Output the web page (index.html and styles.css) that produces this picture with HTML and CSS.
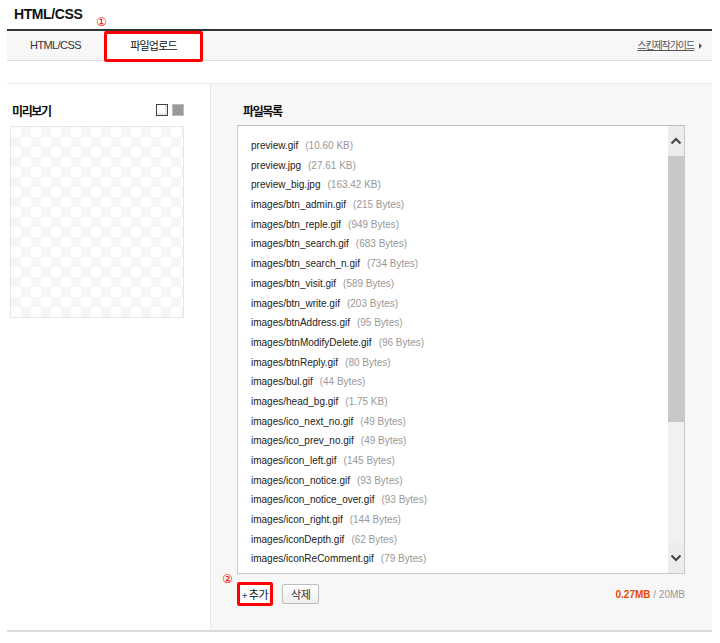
FILE: index.html
```html
<!DOCTYPE html>
<html lang="ko">
<head>
  <meta charset="UTF-8">
  <title>HTML/CSS 파일업로드</title>
  <link rel="stylesheet" href="styles.css">
</head>
<body>
  <div id="skin-editor">
    <h1 class="title">HTML/CSS</h1>
    <span class="mark mark-1">①</span>
    <div class="tabs">
      <div class="tab">HTML/CSS</div>
      <div class="tab active">파일업로드</div>
      <a class="guide" href="#">스킨제작가이드</a>
      <span class="guide-arrow"></span>
    </div>

    <div class="content">
      <div class="preview-panel">
        <div class="panel-head">
          <h3>미리보기</h3>
          <div class="bg-toggle">
            <span class="bg-white"></span>
            <span class="bg-gray"></span>
          </div>
        </div>
        <div class="preview-box"></div>
      </div>

      <div class="files-panel">
        <div class="panel-head">
          <h3>파일목록</h3>
        </div>
        <div class="file-box">
          <ul class="file-list">
            <li>preview.gif<span class="size">(10.60 KB)</span></li>
            <li>preview.jpg<span class="size">(27.61 KB)</span></li>
            <li>preview_big.jpg<span class="size">(163.42 KB)</span></li>
            <li>images/btn_admin.gif<span class="size">(215 Bytes)</span></li>
            <li>images/btn_reple.gif<span class="size">(949 Bytes)</span></li>
            <li>images/btn_search.gif<span class="size">(683 Bytes)</span></li>
            <li>images/btn_search_n.gif<span class="size">(734 Bytes)</span></li>
            <li>images/btn_visit.gif<span class="size">(589 Bytes)</span></li>
            <li>images/btn_write.gif<span class="size">(203 Bytes)</span></li>
            <li>images/btnAddress.gif<span class="size">(95 Bytes)</span></li>
            <li>images/btnModifyDelete.gif<span class="size">(96 Bytes)</span></li>
            <li>images/btnReply.gif<span class="size">(80 Bytes)</span></li>
            <li>images/bul.gif<span class="size">(44 Bytes)</span></li>
            <li>images/head_bg.gif<span class="size">(1.75 KB)</span></li>
            <li>images/ico_next_no.gif<span class="size">(49 Bytes)</span></li>
            <li>images/ico_prev_no.gif<span class="size">(49 Bytes)</span></li>
            <li>images/icon_left.gif<span class="size">(145 Bytes)</span></li>
            <li>images/icon_notice.gif<span class="size">(93 Bytes)</span></li>
            <li>images/icon_notice_over.gif<span class="size">(93 Bytes)</span></li>
            <li>images/icon_right.gif<span class="size">(144 Bytes)</span></li>
            <li>images/iconDepth.gif<span class="size">(62 Bytes)</span></li>
            <li>images/iconReComment.gif<span class="size">(79 Bytes)</span></li>
            <li>images/iconTag.gif<span class="size">(126 Bytes)</span></li>
          </ul>
          <div class="scrollbar">
            <div class="arrow">
              <svg width="12" height="8" viewBox="0 0 12 8"><path d="M1.5 6.5 L6 2 L10.5 6.5" fill="none" stroke="#444" stroke-width="2"/></svg>
            </div>
            <div class="thumb"></div>
            <div class="arrow arrow-down">
              <svg width="12" height="8" viewBox="0 0 12 8"><path d="M1.5 1.5 L6 6 L10.5 1.5" fill="none" stroke="#444" stroke-width="2"/></svg>
            </div>
          </div>
        </div>
        <div class="file-actions">
          <button class="btn btn-add"><span class="plus">+</span>추가</button>
          <button class="btn">삭제</button>
          <span class="capacity"><b>0.27MB</b> / 20MB</span>
        </div>
        <span class="mark mark-2">②</span>
      </div>
    </div>
  </div>
</body>
</html>
```

FILE: styles.css
```css
body {
  margin: 0;
  background: #fff;
  font-family: "Liberation Sans", "Noto Sans CJK KR", sans-serif;
  color: #333;
}

#skin-editor {
  position: relative;
  width: 705px;
  margin-left: 7px;
}

.title {
  margin: 0;
  height: 31px;
  padding-left: 7px;
  box-sizing: border-box;
  line-height: 29px;
  font-size: 14px;
  letter-spacing: -0.4px;
  color: #111;
  border-bottom: 2px solid #333;
}

.mark {
  position: absolute;
  color: #f00;
  font-size: 12px;
  line-height: 12px;
  font-family: "DejaVu Sans", "Noto Sans CJK KR", sans-serif;
}

.mark-1 {
  left: 89px;
  top: 16px;
}

.tabs {
  display: flex;
  align-items: flex-start;
  height: 29px;
  background: #f7f7f7;
  border-bottom: 1px solid #dcdcdc;
}

.tab {
  width: 97px;
  height: 29px;
  line-height: 29px;
  text-align: center;
  font-size: 11px;
  letter-spacing: -0.6px;
  color: #333;
}

.tab.active {
  width: 99px;
  height: 31px;
  box-sizing: border-box;
  line-height: 25px;
  background: #fff;
  border: 3px solid #f00;
  border-radius: 2px;
  letter-spacing: -0.8px;
  color: #111;
}

.guide {
  margin-left: auto;
  line-height: 29px;
  font-size: 10px;
  letter-spacing: -1.1px;
  color: #555;
  text-decoration: underline;
}

.guide-arrow {
  width: 0;
  height: 0;
  margin: 12px 10px 0 5px;
  border-left: 3px solid #555;
  border-top: 3px solid transparent;
  border-bottom: 3px solid transparent;
}

.content {
  display: flex;
  margin-top: 22px;
  height: 546px;
  border-top: 1px solid #ececec;
  border-bottom: 2px solid #dcdcdc;
}

.preview-panel {
  width: 204px;
  box-sizing: border-box;
  padding: 18px 0 0 3px;
  border-right: 1px solid #e8e8e8;
}

.panel-head {
  display: flex;
  align-items: center;
  height: 16px;
}

.panel-head h3 {
  margin: 0;
  padding-left: 2px;
  font-size: 12px;
  letter-spacing: -1.4px;
  color: #111;
  white-space: nowrap;
}

.bg-toggle {
  display: flex;
  gap: 4px;
  margin-left: auto;
  margin-right: 26px;
}

.bg-toggle span {
  width: 12px;
  height: 12px;
  box-sizing: border-box;
}

.bg-white {
  background: #fff;
  border: 1px solid #444;
  box-shadow: inset -2px -2px 0 #e6e6e6;
}

.bg-gray {
  background: #9a9a9a;
  border: 1px solid #bbb;
}

.preview-box {
  width: 174px;
  height: 192px;
  margin-top: 8px;
  box-sizing: border-box;
  border: 1px solid #e6e6e6;
  background: repeating-conic-gradient(#f6f6f6 0 25%, #fff 0 50%) 0 0 / 20px 20px;
}

.files-panel {
  position: relative;
  flex: 1;
  padding: 18px 0 0 26px;
  background: #f7f7f7;
}

.files-panel .panel-head h3 {
  padding-left: 6px;
}

.file-box {
  position: relative;
  width: 448px;
  height: 449px;
  margin-top: 7px;
  box-sizing: border-box;
  background: #fff;
  border: 1px solid #c9c9c9;
  border-top-color: #bdbdbd;
  overflow: hidden;
}

.file-list {
  margin: 0;
  padding: 10px 0 0 13px;
  list-style: none;
}

.file-list li {
  height: 19.7px;
  line-height: 19.7px;
  font-size: 10px;
  color: #222;
  white-space: nowrap;
}

.size {
  margin-left: 7px;
  color: #999;
}

.scrollbar {
  position: absolute;
  top: 0;
  right: 0;
  bottom: 0;
  width: 16px;
  display: flex;
  flex-direction: column;
  background: #f1f1f1;
}

.arrow {
  height: 30px;
  display: flex;
  align-items: center;
  justify-content: center;
  background: #ececec;
}

.thumb {
  height: 266px;
  background: #c8c8c8;
}

.arrow-down {
  margin-top: auto;
  height: 30px;
}

.file-actions {
  display: flex;
  align-items: center;
  width: 448px;
  margin-top: 8px;
  gap: 9px;
}

.btn {
  height: 20px;
  padding: 0 8px;
  font-family: "Liberation Sans", "Noto Sans CJK KR", sans-serif;
  font-size: 11px;
  letter-spacing: -0.5px;
  color: #333;
  background: linear-gradient(#fff, #eeeeee);
  border: 1px solid #bdbdbd;
  border-radius: 2px;
}

.btn-add {
  height: 24px;
  padding: 0 2px;
  border: 3px solid #f00;
  background: #fff;
  color: #111;
}

.plus {
  margin-right: 2px;
  color: #3b5998;
  font-weight: bold;
  font-size: 9px;
}

.capacity {
  margin-left: auto;
  font-size: 10px;
  color: #999;
}

.capacity b {
  color: #e64a00;
}

.mark-2 {
  left: 11px;
  top: 489px;
}
```
